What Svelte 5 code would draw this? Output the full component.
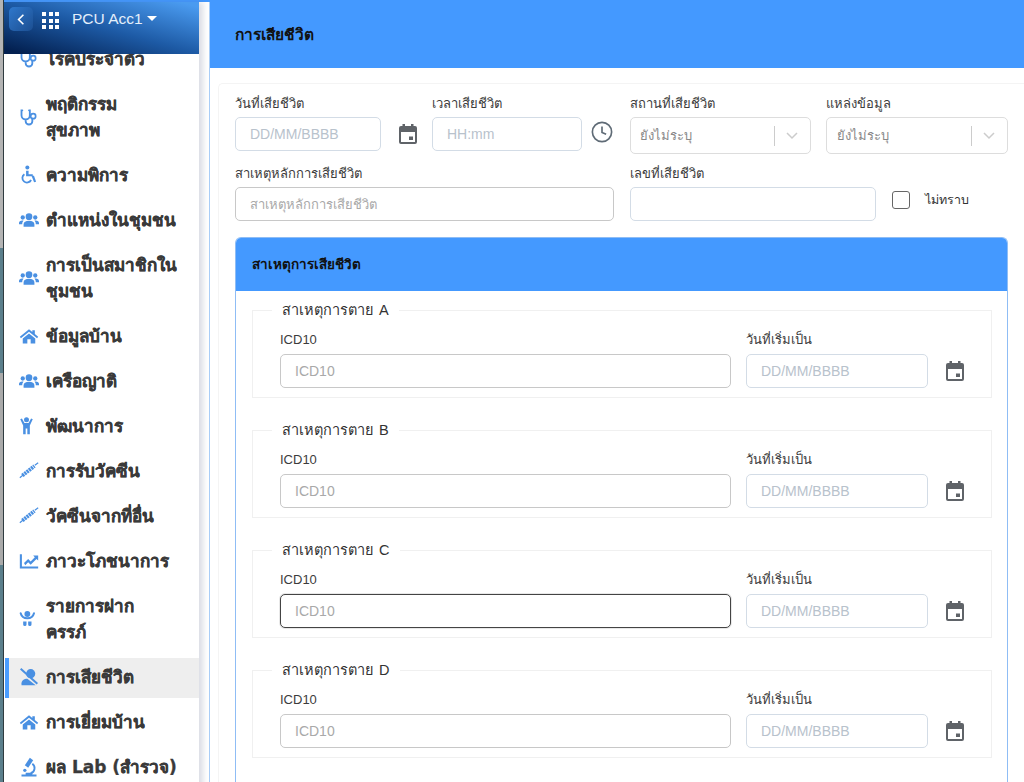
<script>
  const menu = [
    { icon: 'steth', lines: ['โรคประจำตัว'] },
    { icon: 'steth', lines: ['พฤติกรรม', 'สุขภาพ'] },
    { icon: 'wheel', lines: ['ความพิการ'] },
    { icon: 'users', lines: ['ตำแหน่งในชุมชน'] },
    { icon: 'users', lines: ['การเป็นสมาชิกใน', 'ชุมชน'] },
    { icon: 'home', lines: ['ข้อมูลบ้าน'] },
    { icon: 'users', lines: ['เครือญาติ'] },
    { icon: 'child', lines: ['พัฒนาการ'] },
    { icon: 'syringe', lines: ['การรับวัคซีน'] },
    { icon: 'syringe', lines: ['วัคซีนจากที่อื่น'] },
    { icon: 'chart', lines: ['ภาวะโภชนาการ'] },
    { icon: 'baby', lines: ['รายการฝาก', 'ครรภ์'] },
    { icon: 'dead', lines: ['การเสียชีวิต'], active: true },
    { icon: 'home', lines: ['การเยี่ยมบ้าน'] },
    { icon: 'micro', lines: ['ผล Lab (สำรวจ)'] }
  ];

  const causes = ['A', 'B', 'C', 'D'];
</script>

{#snippet calendar()}
  <svg class="cal" viewBox="0 0 18 20" width="18" height="20">
    <path fill="#5f6368" fill-rule="evenodd" d="M3.500 0h2.500v2h6V0h2.500v2H16a2 2 0 0 1 2 2v14a2 2 0 0 1-2 2H2a2 2 0 0 1-2-2V4a2 2 0 0 1 2-2h1.500zM2 8v10h14V8zm8 4.500h4v3.500h-4z"/>
  </svg>
{/snippet}

{#snippet chevron()}
  <svg viewBox="0 0 12 8" width="12" height="8"><path d="M1 1l5 5 5-5" fill="none" stroke="#ccc" stroke-width="1.500"/></svg>
{/snippet}

{#snippet menuIcon(name)}
  <svg class="micon" viewBox="0 0 24 24" width="20" height="20" fill="#4a90e2">
    {#if name === 'steth'}
      <path fill="none" stroke="#4a90e2" stroke-width="2.200" stroke-linecap="round" d="M4 4H3v6a5 5 0 0 0 10 0V4h-1M8 15v2a4 4 0 0 0 8 0v-3"/>
      <circle cx="17" cy="11" r="3" fill="none" stroke="#4a90e2" stroke-width="2"/>
    {:else if name === 'wheel'}
      <circle cx="10" cy="3" r="2.400"/>
      <path d="M8.500 7h3v4h5v2.500h-8z"/>
      <path fill="none" stroke="#4a90e2" stroke-width="2.200" d="M6.500 11a5.500 5.500 0 1 0 8 7"/>
      <path d="M15 13h3l2.500 7-2.400.6z"/>
    {:else if name === 'users'}
      <circle cx="12" cy="8" r="4"/>
      <circle cx="4.500" cy="9" r="2.600"/>
      <circle cx="19.500" cy="9" r="2.600"/>
      <path d="M5.500 20v-2.500C5.500 14.500 8 13 12 13s6.500 1.500 6.500 4.500V20zM0 17v-1.500C0 13.500 1.500 12.500 4 12.500c.6 0 1 .1 1.400.2A6 6 0 0 0 3.800 17zM24 17v-1.500c0-2-1.500-3-4-3-.6 0-1 .1-1.400.2a6 6 0 0 1 1.600 4.300z"/>
    {:else if name === 'home'}
      <path d="M12 4 1 13l1.300 1.600L12 6.800l9.700 7.800L23 13l-4-3.300V5h-3v2.200z"/>
      <path d="M4.500 15 12 9l7.500 6v6h-5.500v-5h-4v5H4.500z"/>
    {:else if name === 'child'}
      <circle cx="9" cy="4.500" r="3"/>
      <path d="M1.500 4 3.500 3 6.500 8.500h5l3-5.500 2 1-3.500 7.500V22h-3v-7H8v7H5V11.500z"/>
    {:else if name === 'syringe'}
      <path fill="none" stroke="#4a90e2" stroke-width="1.500" d="M1 20l5-4M19 5l4-3"/>
      <path fill="none" stroke="#4a90e2" stroke-width="4.500" stroke-dasharray="2.600 .8" d="M4 17.500 18.500 6"/>
    {:else if name === 'chart'}
      <path d="M1 4h2.500v14.500H23V21H1z"/>
      <path d="M6 14.500l5-5 3 3 5-5-2-2h6v6l-2-2-7 7-3-3-3.500 3.500z"/>
    {:else if name === 'baby'}
      <circle cx="10" cy="6" r="3.500"/>
      <path fill="none" stroke="#4a90e2" stroke-width="2.400" stroke-linecap="round" d="M2 5c1 4 4 6 8 6s7-2 8-6"/>
      <path d="M5 15h4v3.500a2 2 0 0 1-4 0zM11 15h4v3.500a2 2 0 0 1-4 0z"/>
    {:else if name === 'dead'}
      <circle cx="14" cy="8" r="5.500"/>
      <path d="M3 22v-2.500c0-3 3-5.500 7-5.500l10 8z"/>
      <path fill="none" stroke="#4a90e2" stroke-width="2.400" d="M2 2l20 18"/>
    {:else if name === 'micro'}
      <path d="M13 1l4 3-6 9-4-3z"/>
      <path d="M3 21h18v2.500H3zM8 19h8v2H8z"/>
      <path fill="none" stroke="#4a90e2" stroke-width="2.200" d="M16 8a6.500 6.500 0 0 1-2 11.500"/>
      <circle cx="7" cy="16" r="2"/>
    {/if}
  </svg>
{/snippet}

<div class="page">
  <div class="strip"></div>

  <div class="window">
    <div class="topline"></div>
    <div class="columns">
      <aside class="sidebar">
        <header class="sidetop">
          <span class="back">
            <svg viewBox="0 0 10 16" width="8" height="13"><path d="M8 2 2 8l6 6" fill="none" stroke="#fff" stroke-width="2"/></svg>
          </span>
          <span class="apps">
            {#each Array(9) as _}<i></i>{/each}
          </span>
          <span class="acc">PCU Acc1</span>
          <span class="caret"></span>
        </header>
        <nav class="nav">
          {#each menu as m}
            <div class="item" class:active={m.active}>
              {@render menuIcon(m.icon)}
              <div class="label">
                {#each m.lines as l}<div>{l}</div>{/each}
              </div>
            </div>
          {/each}
        </nav>
      </aside>

      <main class="main">
        <div class="title">การเสียชีวิต</div>
        <div class="card">
          <div class="row">
            <div class="f date">
              <label>วันที่เสียชีวิต</label>
              <div class="withicon">
                <div class="input soft w146"><span class="ph latin blue">DD/MM/BBBB</span></div>
                {@render calendar()}
              </div>
            </div>
            <div class="f time">
              <label>เวลาเสียชีวิต</label>
              <div class="withicon">
                <div class="input soft w150"><span class="ph latin blue">HH:mm</span></div>
                <svg viewBox="0 0 24 24" width="22" height="22" class="clock">
                  <circle cx="12" cy="12" r="10.500" fill="none" stroke="#5f6b76" stroke-width="1.800"/>
                  <path d="M12 6v6.500l4.500 2" fill="none" stroke="#5f6b76" stroke-width="1.800"/>
                </svg>
              </div>
            </div>
            <div class="f place">
              <label>สถานที่เสียชีวิต</label>
              <div class="select">
                <span class="ph">ยังไม่ระบุ</span>
                <span class="sep"></span>
                {@render chevron()}
              </div>
            </div>
            <div class="f source">
              <label>แหล่งข้อมูล</label>
              <div class="select">
                <span class="ph">ยังไม่ระบุ</span>
                <span class="sep"></span>
                {@render chevron()}
              </div>
            </div>
          </div>

          <div class="row r2">
            <div class="f cause">
              <label>สาเหตุหลักการเสียชีวิต</label>
              <div class="input plain"><span class="ph grey">สาเหตุหลักการเสียชีวิต</span></div>
            </div>
            <div class="f num">
              <label>เลขที่เสียชีวิต</label>
              <div class="input soft"></div>
            </div>
            <div class="unknown">
              <span class="check"></span>
              <span>ไม่ทราบ</span>
            </div>
          </div>

          <section class="panel">
            <div class="panelhead">สาเหตุการเสียชีวิต</div>
            <div class="panelbody">
              {#each causes as c}
                <fieldset>
                  <legend>สาเหตุการตาย {c}</legend>
                  <div class="icdrow">
                    <div class="f icd">
                      <label>ICD10</label>
                      <div class="input plain" class:focus={c === 'C'}><span class="ph latin grey">ICD10</span></div>
                    </div>
                    <div class="f start">
                      <label>วันที่เริ่มเป็น</label>
                      <div class="withicon">
                        <div class="input soft w182"><span class="ph latin blue">DD/MM/BBBB</span></div>
                        {@render calendar()}
                      </div>
                    </div>
                  </div>
                </fieldset>
              {/each}
            </div>
          </section>
        </div>
      </main>
    </div>
  </div>
</div>

<style>
  :global(body) {
    margin: 0;
    background: #fff;
  }

  .page {
    display: flex;
    width: 1024px;
    height: 782px;
    overflow: hidden;
    font-family: "Liberation Sans", "Noto Sans", sans-serif;
    color: #333;
  }

  .strip {
    flex: 0 0 3px;
    border-right: 1px solid #2f3b40;
    background: linear-gradient(
      to bottom,
      #b4b4b4 0 248px,
      #5b7f8c 248px 373px,
      #aaa 373px 565px,
      #5b7f8c 565px
    );
  }

  .window {
    flex: 1;
    min-width: 0;
  }

  .topline {
    height: 2px;
    background: #4499ff;
  }

  .columns {
    display: flex;
  }

  .sidebar {
    flex: 0 0 195px;
    background: #fff;
    box-shadow: 4px 0 6px rgba(70, 80, 120, 0.2);
    z-index: 1;
  }

  .sidetop {
    position: relative;
    z-index: 2;
    height: 52px;
    display: flex;
    align-items: flex-start;
    padding: 5px 0 0 5px;
    box-sizing: border-box;
    background: linear-gradient(to bottom left, #4a9bf0 5%, #1d5aa5 50%, #032050 95%);
    color: #fff;
  }

  .back {
    width: 24px;
    height: 24px;
    border-radius: 5px;
    background: linear-gradient(to bottom right, #2f78cc, #1c4f92);
    display: flex;
    align-items: center;
    justify-content: center;
  }

  .apps {
    display: grid;
    grid-template-columns: repeat(3, 4px);
    gap: 2.500px;
    margin: 5px 0 0 9px;
  }

  .apps i {
    width: 4px;
    height: 4px;
    background: #fff;
  }

  .acc {
    margin: 0 0 0 13px;
    font-size: 15.500px;
    line-height: 24px;
    color: #e4effb;
  }

  .caret {
    margin: 9px 0 0 4px;
    border-left: 5px solid transparent;
    border-right: 5px solid transparent;
    border-top: 5px solid #fff;
  }

  .nav {
    margin-top: -14px;
  }

  .item {
    display: flex;
    align-items: center;
    min-height: 40px;
    padding: 6px 0 8px 15px;
    box-sizing: border-box;
    margin-bottom: 5px;
  }

  .item.active {
    background: #eee;
    margin-left: 1px;
    padding-left: 14px;
    box-shadow: inset 4px 0 0 #4a9dff;
  }

  .micon {
    flex: 0 0 20px;
    margin-right: 7px;
  }

  .label {
    font-family: "DejaVu Sans", "Noto Sans", sans-serif;
    font-size: 17px;
    font-weight: 700;
    line-height: 26px;
    color: #3a3a3a;
    -webkit-text-stroke: 0.3px #3a3a3a;
  }

  .main {
    flex: 1;
    margin-left: 10px;
    border-left: 1px solid #a9cdf7;
    min-width: 0;
  }

  .title {
    height: 64px;
    padding: 0 0 2px 25px;
    background: #4499ff;
    display: flex;
    align-items: center;
    font-size: 15.500px;
    font-weight: 700;
    color: #111;
  }

  .card {
    margin: 15px 0 0 8px;
    padding: 9px 16px 0 16px;
    border: 1px solid #f4f4f4;
    border-radius: 5px 0 0 0;
    border-right: 0;
    border-bottom: 0;
  }

  .row {
    display: flex;
  }

  .f label {
    display: block;
    font-size: 13px;
    line-height: 22px;
    margin-bottom: -2px;
    color: #3c3c3c;
  }

  .input {
    height: 34px;
    box-sizing: border-box;
    border-radius: 5px;
    display: flex;
    align-items: center;
    padding-left: 14px;
    background: #fff;
    margin-top: 4px;
  }

  .soft {
    border: 1px solid #d3dce6;
  }

  .plain {
    border: 1px solid #c8c8c8;
  }

  .focus {
    border: 1px solid #444;
    box-shadow: 0 0 0 1px #e8e8e8;
  }

  .w146 { width: 146px; }
  .w150 { width: 150px; }
  .w182 { width: 182px; }

  .ph {
    font-size: 13px;
  }

  .latin {
    font-size: 14px;
  }

  .blue {
    color: #b8c2cc;
  }

  .grey {
    color: #a9a9a9;
  }

  .withicon {
    display: flex;
    align-items: center;
  }

  .withicon .cal {
    margin: 4px 0 0 18px;
  }

  .clock {
    margin: 0 0 0 9px;
  }

  .date { width: 197px; }
  .time { width: 198px; }
  .place { width: 196px; }
  .source { width: 182px; }

  .select {
    height: 37px;
    width: 181px;
    box-sizing: border-box;
    border: 1px solid #ddd;
    border-radius: 5px;
    display: flex;
    align-items: center;
    padding: 0 12px 0 9px;
    margin-top: 4px;
  }

  .source .select {
    width: 182px;
    padding-left: 10px;
  }

  .select .ph {
    flex: 1;
    color: #888;
  }

  .sep {
    width: 1px;
    height: 20px;
    background: #ccc;
    margin-right: 11px;
  }

  .r2 {
    margin-top: 9px;
  }

  .cause { width: 395px; }
  .num { width: 262px; }

  .cause .input {
    width: 379px;
  }

  .num .input {
    width: 246px;
  }

  .unknown {
    display: flex;
    align-items: center;
    gap: 15px;
    margin-top: 20px;
    height: 34px;
    font-size: 12.500px;
  }

  .check {
    width: 18px;
    height: 18px;
    box-sizing: border-box;
    border: 1px solid #666;
    border-radius: 3px;
  }

  .panel {
    margin-top: 16px;
    border: 1px solid #8fbdf5;
    border-radius: 6px 6px 0 0;
    border-bottom: 0;
  }

  .panelhead {
    height: 51px;
    padding: 0 0 2px 16px;
    background: #4499ff;
    border-radius: 5px 5px 0 0;
    display: flex;
    align-items: center;
    font-size: 13.500px;
    font-weight: 700;
    color: #111;
  }

  .panelbody {
    padding: 9px 15px 40px 16px;
  }

  fieldset {
    margin: 0 0 22px;
    padding: 0 27px 8px;
    height: 98px;
    box-sizing: border-box;
    border: 1px solid #f0f0f0;
  }

  legend {
    padding: 0 10px;
    margin-left: -8px;
    font-size: 14.500px;
    line-height: 20px;
    word-spacing: 2px;
    color: #333;
  }

  .icdrow {
    display: flex;
    margin-top: 9px;
  }

  .icdrow .input {
    margin-top: 5px;
  }

  .icd { width: 466px; }

  .icd .input {
    width: 451px;
  }
</style>
